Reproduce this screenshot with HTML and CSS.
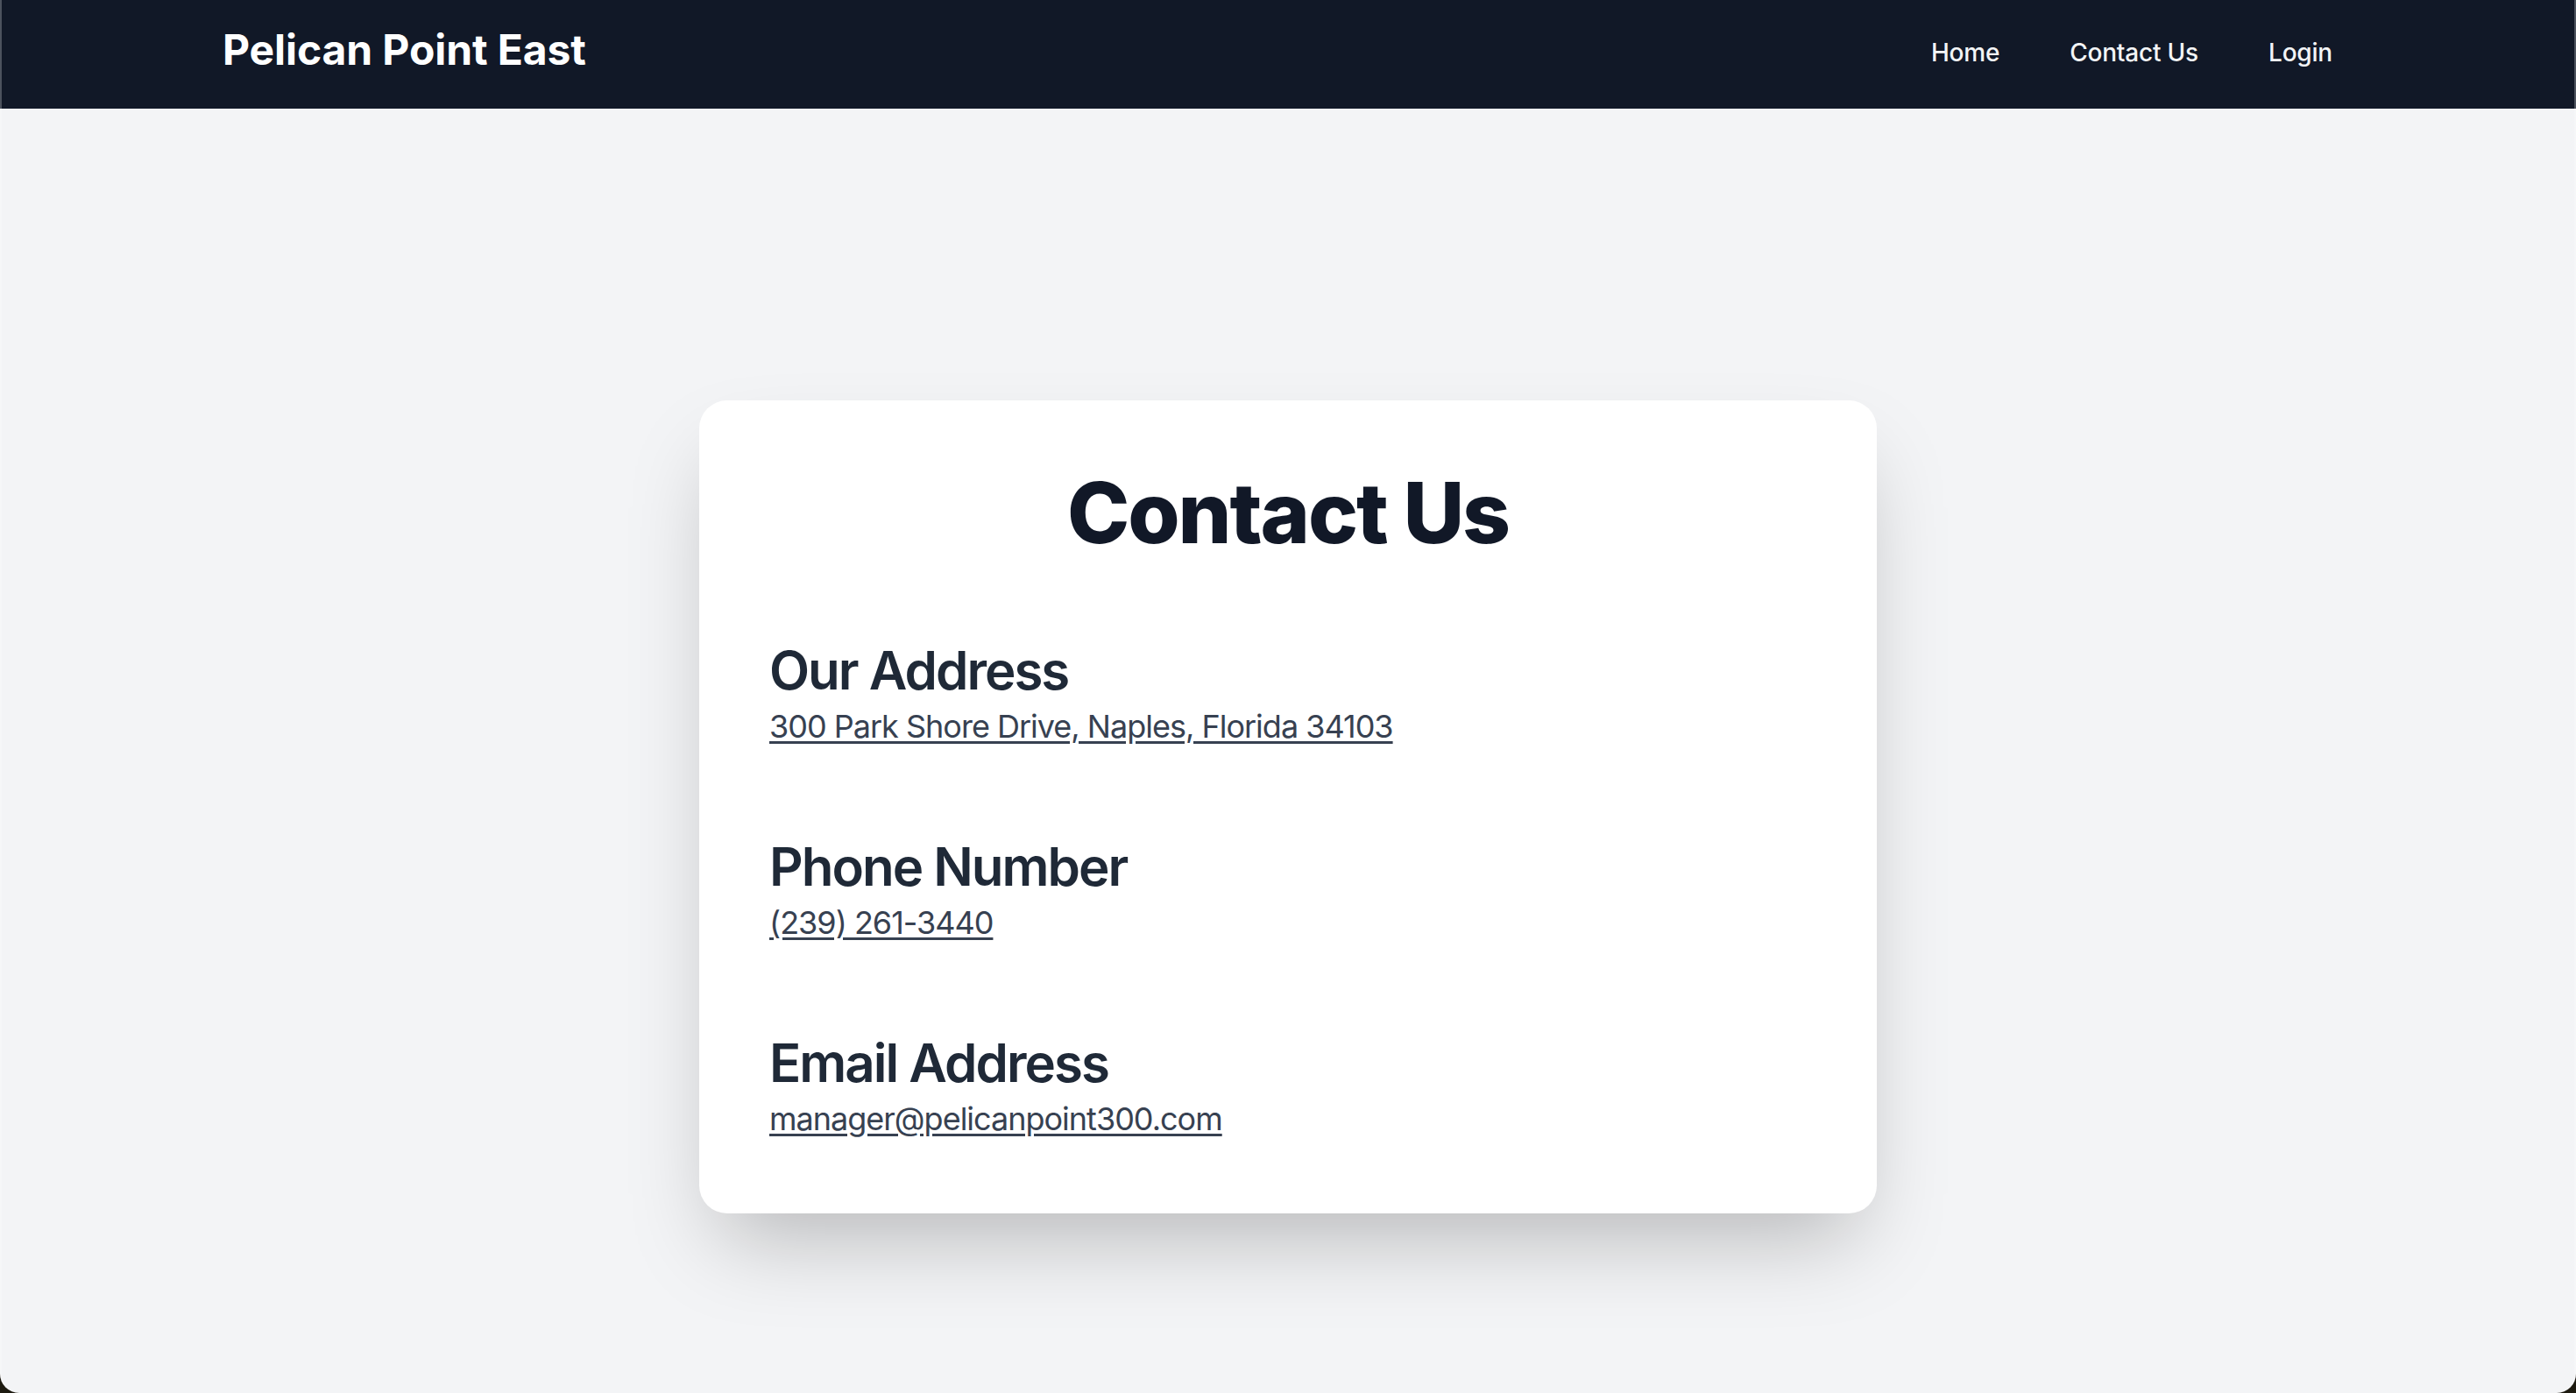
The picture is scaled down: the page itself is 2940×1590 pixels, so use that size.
FILE: index.html
```html
<!DOCTYPE html>
<html lang="en">
<head>
<meta charset="utf-8">
<title>Contact Us - Pelican Point East</title>
<link rel="stylesheet" href="styles.css">
</head>
<body>
<nav class="navbar">
  <div class="nav-inner">
    <a class="brand" href="#">Pelican Point East</a>
    <div class="nav-links">
      <a class="nav-link" href="#">Home</a>
      <a class="nav-link" href="#">Contact Us</a>
      <a class="nav-link" href="#">Login</a>
    </div>
  </div>
</nav>
<main class="main">
  <section class="card">
    <h1 class="card-title">Contact Us</h1>
    <div class="sections">
      <div class="item">
        <h2 class="item-title">Our Address</h2>
        <a class="item-link" href="#">300 Park Shore Drive, Naples, Florida 34103</a>
      </div>
      <div class="item">
        <h2 class="item-title">Phone Number</h2>
        <a class="item-link" href="#">(239) 261-3440</a>
      </div>
      <div class="item">
        <h2 class="item-title">Email Address</h2>
        <a class="item-link" href="#">manager@pelicanpoint300.com</a>
      </div>
    </div>
  </section>
</main>
<div class="window-frame"></div>
</body>
</html>
```

FILE: styles.css
```css
* {
  box-sizing: border-box;
}

html, body {
  margin: 0;
  padding: 0;
}

body {
  background: #f3f4f6;
  font-family: Inter, "Noto Sans", "Liberation Sans", sans-serif;
  -webkit-font-smoothing: antialiased;
}

.navbar {
  background: #111827;
  height: 124px;
}

.nav-inner {
  max-width: 2560px;
  margin: 0 auto;
  padding: 0 64px;
  height: 100%;
  display: flex;
  justify-content: space-between;
  align-items: flex-start;
}

.brand {
  margin-top: 25px;
  font-size: 48px;
  line-height: 64px;
  font-weight: 700;
  color: #ffffff;
  text-decoration: none;
  letter-spacing: -0.1px;
}

.nav-links {
  display: flex;
  gap: 32px;
  margin-top: 40px;
}

.nav-link {
  padding: 0 24px;
  font-size: 28px;
  line-height: 40px;
  font-weight: 500;
  color: #f3f4f6;
  text-decoration: none;
  letter-spacing: -0.2px;
}

.main {
  min-height: 1590px;
  display: flex;
  align-items: center;
  justify-content: center;
  padding-top: 4px;
}

.card {
  width: 1344px;
  background: #ffffff;
  border-radius: 32px;
  padding: 80px;
  box-shadow: 0 50px 100px -24px rgba(0, 0, 0, 0.25);
}

.card-title {
  margin: 0 0 96px;
  text-align: center;
  font-size: 96px;
  line-height: 96px;
  font-weight: 800;
  color: #111827;
  letter-spacing: -2.1px;
}

.sections {
  display: flex;
  flex-direction: column;
  gap: 96px;
}

.item {
  display: flex;
  flex-direction: column;
  align-items: flex-start;
}

.item-title {
  margin: 0;
  font-size: 60px;
  line-height: 72px;
  font-weight: 600;
  color: #1f2937;
  letter-spacing: -2px;
}

.item-link {
  font-size: 36px;
  line-height: 56px;
  color: #374151;
  text-decoration: underline;
  text-underline-offset: 4px;
  letter-spacing: -1px;
}

.window-frame {
  position: fixed;
  inset: 0;
  pointer-events: none;
  border-radius: 0 0 22px 22px;
  box-shadow: 0 0 0 40px #1d1a10;
  border-left: 2px solid rgba(255, 255, 255, 0.25);
  border-right: 2px solid rgba(255, 255, 255, 0.25);
}
```
